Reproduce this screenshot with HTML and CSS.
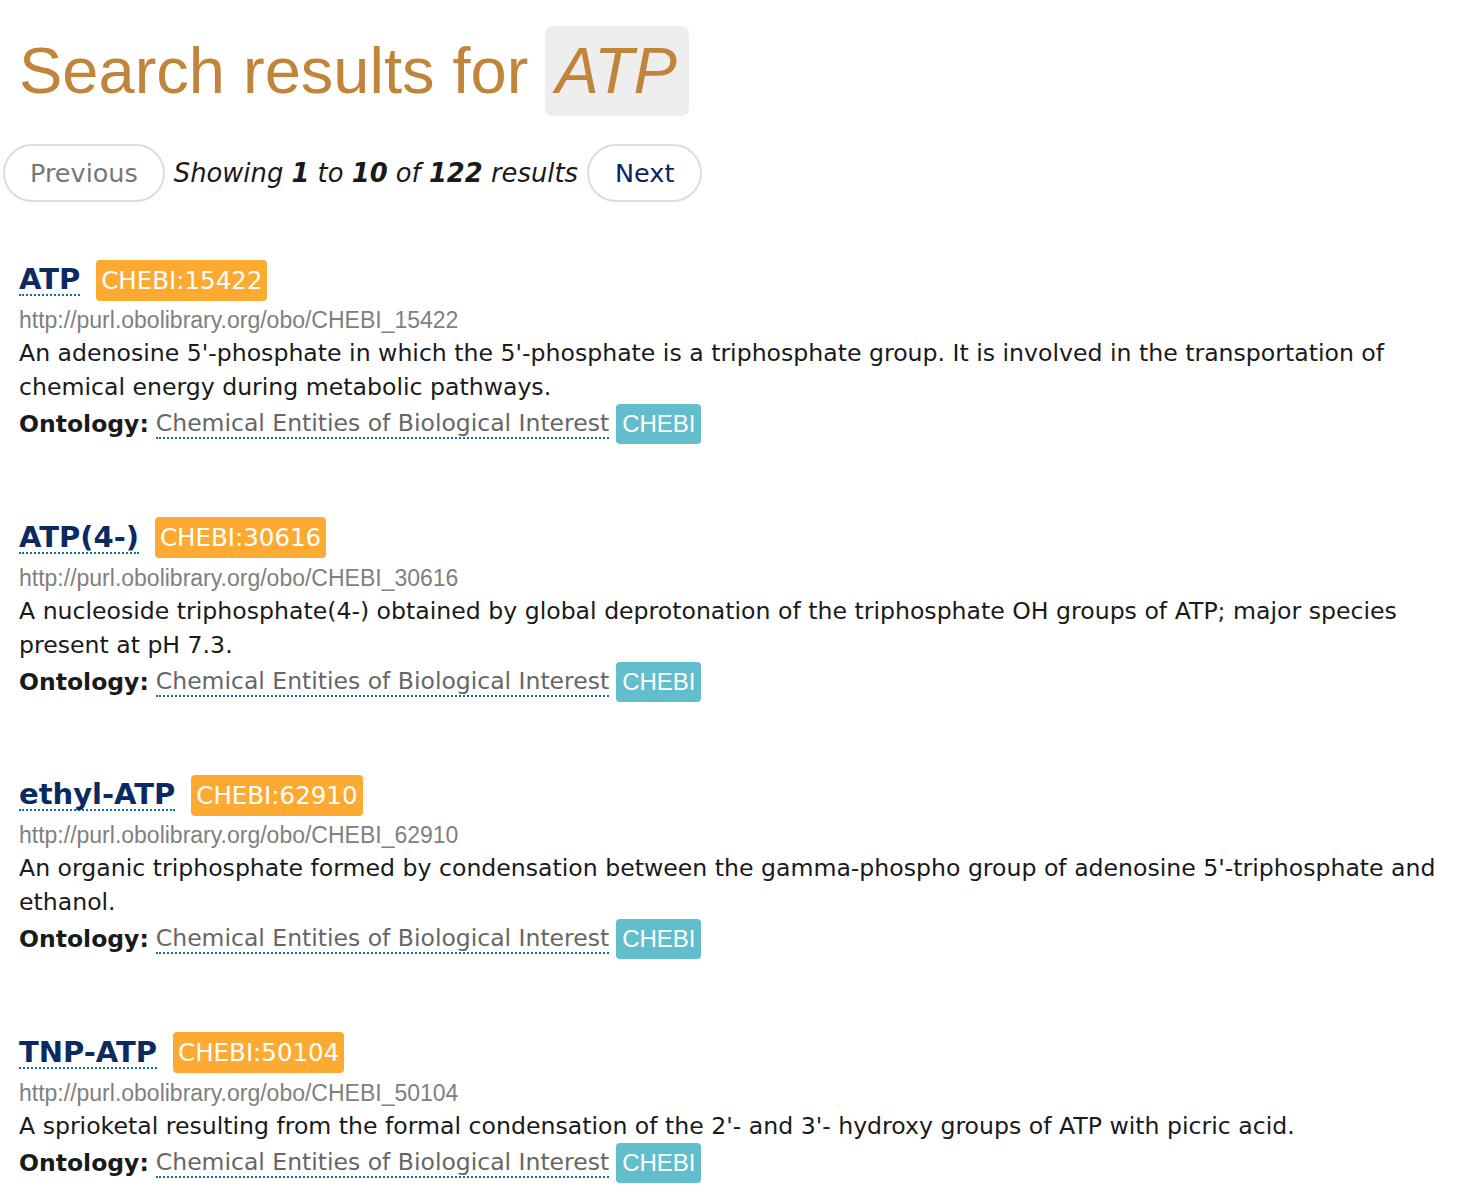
FILE: index.html
```html
<!DOCTYPE html>
<html>
<head>
<meta charset="utf-8">
<link rel="stylesheet" href="styles.css">
</head>
<body>
<div class="page">
  <h1 class="heading">Search results for <span class="query">ATP</span></h1>
  <div class="pager">
    <button class="btn btn-prev">Previous</button>
    <span class="showing">Showing <b>1</b> to <b>10</b> of <b>122</b> results</span>
    <button class="btn btn-next">Next</button>
  </div>
  <div class="results">
    <div class="result">
      <div class="title-row"><a class="term">ATP</a><span class="label label-id">CHEBI:15422</span></div>
      <div class="iri">http://purl.obolibrary.org/obo/CHEBI_15422</div>
      <div class="desc">An adenosine 5'-phosphate in which the 5'-phosphate is a triphosphate group. It is involved in the transportation of chemical energy during metabolic pathways.</div>
      <div class="onto"><b>Ontology:</b> <a class="onto-link">Chemical Entities of Biological Interest</a> <span class="label label-onto">CHEBI</span></div>
    </div>
    <div class="result">
      <div class="title-row"><a class="term">ATP(4-)</a><span class="label label-id">CHEBI:30616</span></div>
      <div class="iri">http://purl.obolibrary.org/obo/CHEBI_30616</div>
      <div class="desc">A nucleoside triphosphate(4-) obtained by global deprotonation of the triphosphate OH groups of ATP; major species present at pH 7.3.</div>
      <div class="onto"><b>Ontology:</b> <a class="onto-link">Chemical Entities of Biological Interest</a> <span class="label label-onto">CHEBI</span></div>
    </div>
    <div class="result">
      <div class="title-row"><a class="term">ethyl-ATP</a><span class="label label-id">CHEBI:62910</span></div>
      <div class="iri">http://purl.obolibrary.org/obo/CHEBI_62910</div>
      <div class="desc">An organic triphosphate formed by condensation between the gamma-phospho group of adenosine 5'-triphosphate and ethanol.</div>
      <div class="onto"><b>Ontology:</b> <a class="onto-link">Chemical Entities of Biological Interest</a> <span class="label label-onto">CHEBI</span></div>
    </div>
    <div class="result">
      <div class="title-row"><a class="term">TNP-ATP</a><span class="label label-id">CHEBI:50104</span></div>
      <div class="iri">http://purl.obolibrary.org/obo/CHEBI_50104</div>
      <div class="desc">A sprioketal resulting from the formal condensation of the 2'- and 3'- hydroxy groups of ATP with picric acid.</div>
      <div class="onto"><b>Ontology:</b> <a class="onto-link">Chemical Entities of Biological Interest</a> <span class="label label-onto">CHEBI</span></div>
    </div>
  </div>
</div>
</body>
</html>
```

FILE: styles.css
```css
html, body {
  margin: 0;
  padding: 0;
  background: #fff;
}
.page {
  font-family: "DejaVu Sans", Verdana, sans-serif;
  color: #1a1a1a;
}
.heading {
  margin: 26px 0 0 19px;
  font-family: "Liberation Sans", Arial, sans-serif;
  font-weight: normal;
  font-size: 65px;
  line-height: 90px;
  color: #c1843b;
  display: flex;
  align-items: center;
  gap: 17px;
}
.query {
  background: #eeeeee;
  border-radius: 7px;
  font-style: italic;
  padding: 0 12px 0 10px;
  height: 90px;
  line-height: 90px;
}
.pager {
  margin: 28px 0 0 3px;
  display: flex;
  align-items: center;
  gap: 9px;
}
.btn {
  font-family: "DejaVu Sans", Verdana, sans-serif;
  font-size: 25.5px;
  height: 58px;
  background: #fff;
  border: 2px solid #dddddd;
  border-radius: 29px;
  padding: 0 25px;
}
.btn-prev { color: #777777; }
.btn-next { color: #0b2462; padding: 0 26px; }
.showing {
  font-style: italic;
  font-size: 25.8px;
  color: #1a1a1a;
}
.results {
  margin-top: 57px;
  margin-left: 19px;
  width: 1440px;
}
.result {
  margin-bottom: 72.5px;
}
.title-row {
  display: flex;
  align-items: center;
  gap: 16px;
  height: 42px;
}
.term {
  font-weight: bold;
  font-size: 29px;
  color: #0b2a63;
  text-decoration: none;
  border-bottom: 2px dotted #1a6aa8;
  line-height: 30px;
}
.label {
  font-family: "DejaVu Sans", Verdana, sans-serif;
  color: #fff;
  border-radius: 4px;
  display: inline-block;
}
.label-id {
  background: #fdaa32;
  font-size: 24.5px;
  height: 41px;
  line-height: 41px;
  padding: 0 5px;
}
.iri {
  font-family: "Liberation Sans", Arial, sans-serif;
  color: #808080;
  font-size: 23px;
  margin-top: 3px;
  line-height: 32px;
}
.desc {
  font-size: 23.6px;
  line-height: 34px;
  color: #1a1a1a;
}
.onto {
  font-size: 23.5px;
  line-height: 34px;
  display: flex;
  align-items: center;
  gap: 7px;
}
.onto b { color: #1a1a1a; }
.onto-link {
  color: #666666;
  text-decoration: none;
  border-bottom: 2px dotted #1a6aa8;
  line-height: 28px;
}
.label-onto {
  background: #62bdcc;
  font-family: "Liberation Sans", Arial, sans-serif;
  font-size: 24px;
  height: 40px;
  line-height: 40px;
  padding: 0 6px;
}
```
